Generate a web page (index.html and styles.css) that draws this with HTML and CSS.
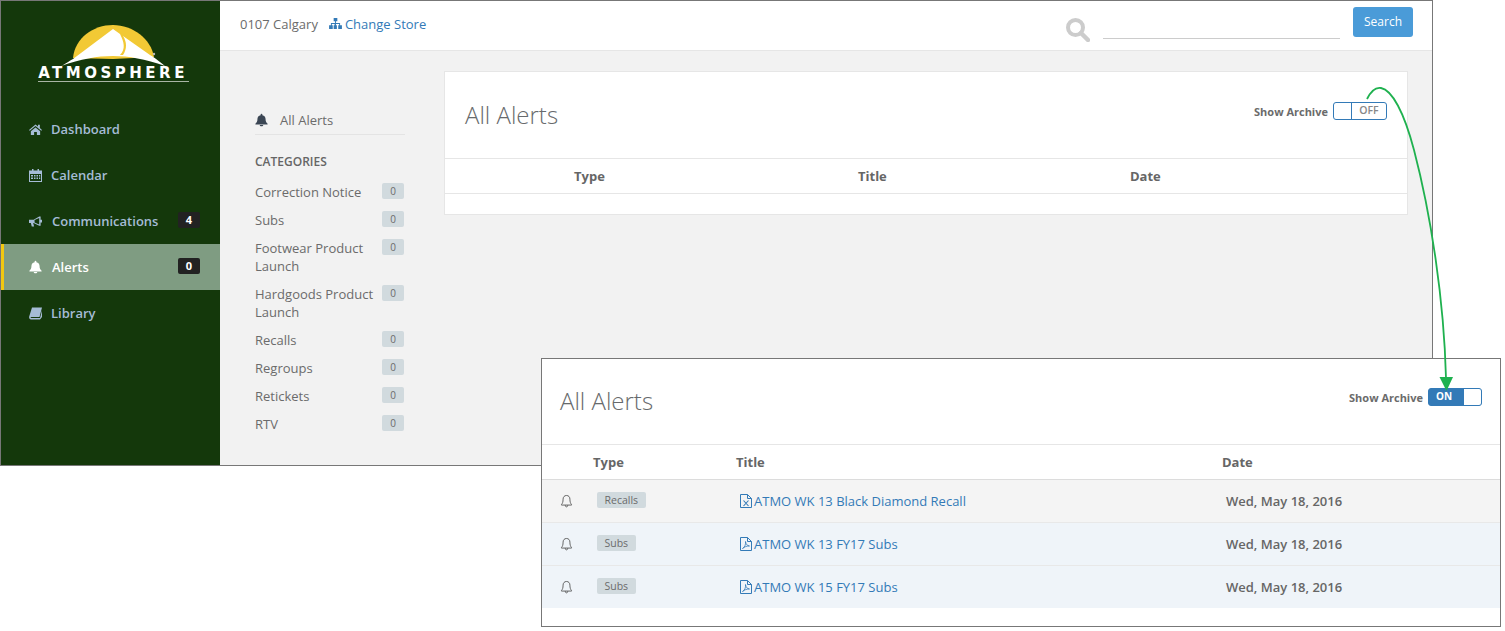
FILE: index.html
```html
<!DOCTYPE html>
<html>
  <head>
    <title>Atmosphere Alerts</title>
    <link rel="stylesheet" href="styles.css">
  </head>
  <body>
    <svg class="sprite" width="0" height="0">
      <symbol id="bell" viewBox="0 0 16 16">
        <path d="M8 0.3c.7 0 1.100.4 1.100 1.100v.7c2.500.5 3.900 2.300 3.900 4.700 0 3 .8 4.300 2.500 5.800v.9H.5v-.9C2.200 11.100 3 9.800 3 6.800 3 4.400 4.400 2.600 6.900 2.100v-.7C6.900.700 7.300.300 8 .300zM5.800 14.300h4.400c0 1-.9 1.500-2.200 1.500s-2.200-.5-2.200-1.500z"/>
      </symbol>
      <symbol id="bell-line" viewBox="0 0 16 16">
        <path d="M8 1.200c2.700 0 4.200 2 4.200 4.500 0 3.600.8 5.300 2 6.700v.6H1.800v-.6c1.200-1.400 2-3.100 2-6.700 0-2.500 1.500-4.500 4.200-4.500zM6.500 13.200c0 1.500.7 2 1.500 2s1.500-.5 1.500-2" fill="none" stroke="currentColor" stroke-width="1.100"/>
      </symbol>
      <symbol id="pdf" viewBox="0 0 12 14">
        <path d="M.5.500h7l4 4v9H.5zM7.500.500v4h4" fill="none" stroke="currentColor"/>
        <path d="M2.500 11.500c2-1 3.500-4 3-7 .5 3 1.500 4 4 4.500-3-.2-5 1-7 2.500z" fill="none" stroke="currentColor" stroke-width=".8"/>
      </symbol>
      <symbol id="xls" viewBox="0 0 12 14">
        <path d="M.5.500h7l4 4v9H.5zM7.500.500v4h4" fill="none" stroke="currentColor"/>
        <path d="M3.500 6.500l5 5.500M8.500 6.500l-5 5.500" fill="none" stroke="currentColor" stroke-width="1.100"/>
      </symbol>
    </svg>

    <div class="window">
      <aside class="sidebar">
        <div class="logo">
          <svg class="logo-mark" width="112" height="44" viewBox="0 0 112 44">
            <path d="M16 34C18 14 36 1 56 1s38 14 41 32L56 35z" fill="#f2c935"/>
            <path d="M4 42C10 39 14 36 16 35L56 5L63 10C67 18 69 25 63 31L66 31C70 25 70 18 66 12L93 31C100 35 104 39 108 42C88 35 72 32 56 32S24 35 4 42z" fill="#fff"/>
            <circle cx="97" cy="30" r="1.200" fill="#bbb"/>
          </svg>
          <div class="logo-name">ATMOSPHERE</div>
        </div>
        <nav class="nav">
          <a class="nav-item">
            <svg class="nav-icon" viewBox="0 0 14 12"><path d="M7 .5L0 6.500l.8.900L7 2.200l6.200 5.200.8-.9-2.300-2V1h-2v1.800zM2 8l5-4.200L12 8v4H8.500V8.800h-3V12H2z"/></svg>
            <span class="nav-label">Dashboard</span>
          </a>
          <a class="nav-item">
            <svg class="nav-icon" viewBox="0 0 13 13"><path d="M3 0h1.500v1.500h4V0H10v1.500h3V13H0V1.500h3zM1 5v7h11V5zM2 6h2v1.500H2zM5 6h1.500v1.500H5zM7.500 6H9v1.500H7.500zM10 6h1.200v1.500H10zM2 8.500h2V10H2zM5 8.500h1.500V10H5zM7.500 8.500H9V10H7.500zM10 8.500h1.200V10H10z" fill-rule="evenodd"/></svg>
            <span class="nav-label">Calendar</span>
          </a>
          <a class="nav-item nav-item-wide">
            <svg class="nav-icon" viewBox="0 0 14 12"><path d="M0 4h5l6-3.500h1.500V4H14v3h-1.500v3.500H11L5 7.500H4.500l1 4H3L2 7.500H0zM6 4.500v2.500l5 2.300V2.200z" fill-rule="evenodd"/></svg>
            <span class="nav-label">Communications</span>
            <span class="nav-badge">4</span>
          </a>
          <a class="nav-item nav-item-wide active">
            <svg class="nav-icon nav-bell"><use href="#bell"/></svg>
            <span class="nav-label">Alerts</span>
            <span class="nav-badge">0</span>
          </a>
          <a class="nav-item">
            <svg class="nav-icon" viewBox="0 0 13 12"><path d="M3 0h10l-2.500 9.500H2.500c-.8 0-1 .5-.8 1h9.300L13 3v6.500L11 12H2C.5 12-.2 10.500.2 9z"/></svg>
            <span class="nav-label">Library</span>
          </a>
        </nav>
      </aside>

      <div class="content">
        <header class="topbar">
          <span class="store">0107 Calgary</span>
          <a class="change-store">
            <svg class="sitemap" viewBox="0 0 14 12"><path d="M5 0h4v3.500H7.500v2h4.500v2.500h2V12h-4V8h1V6.500h-3.500V8h1v4H5V8h1V6.500H3V8h1v4H0V8h2V5.500h4.500v-2H5z"/></svg>
            Change Store
          </a>
          <svg class="search-icon" viewBox="0 0 24 24"><circle cx="9.500" cy="9.500" r="7.500" fill="none" stroke="currentColor" stroke-width="4"/><path d="M15 15l7 7" stroke="currentColor" stroke-width="4.500" stroke-linecap="round"/></svg>
          <div class="search-input"></div>
          <button class="search-btn">Search</button>
        </header>

        <div class="main">
          <div class="filters">
            <div class="all-alerts">
              <svg class="all-icon"><use href="#bell"/></svg>
              All Alerts
            </div>
            <div class="cat-title">CATEGORIES</div>
            <div class="cat"><span>Correction Notice</span><span class="count">0</span></div>
            <div class="cat"><span>Subs</span><span class="count">0</span></div>
            <div class="cat"><span>Footwear Product Launch</span><span class="count">0</span></div>
            <div class="cat"><span>Hardgoods Product Launch</span><span class="count">0</span></div>
            <div class="cat"><span>Recalls</span><span class="count">0</span></div>
            <div class="cat"><span>Regroups</span><span class="count">0</span></div>
            <div class="cat"><span>Retickets</span><span class="count">0</span></div>
            <div class="cat"><span>RTV</span><span class="count">0</span></div>
          </div>

          <section class="panel">
            <div class="panel-head">
              <h1>All Alerts</h1>
              <span class="archive-label">Show Archive</span>
              <div class="switch">
                <span class="knob"></span>
                <span class="switch-off">OFF</span>
              </div>
            </div>
            <div class="cols">
              <span class="col-type">Type</span>
              <span class="col-title">Title</span>
              <span>Date</span>
            </div>
          </section>
        </div>
      </div>
    </div>

    <section class="popout">
      <div class="pop-head">
        <h1>All Alerts</h1>
        <span class="archive-label">Show Archive</span>
        <div class="switch switch-on">
          <span class="switch-text">ON</span>
          <span class="knob"></span>
        </div>
      </div>
      <div class="pop-cols">
        <span class="pc-type">Type</span>
        <span class="pc-title">Title</span>
        <span>Date</span>
      </div>
      <div class="pop-row grey">
        <svg class="row-bell"><use href="#bell-line"/></svg>
        <span class="pc-label"><span class="tag">Recalls</span></span>
        <a class="doc"><svg class="doc-icon"><use href="#xls"/></svg>ATMO WK 13 Black Diamond Recall</a>
        <span class="row-date">Wed, May 18, 2016</span>
      </div>
      <div class="pop-row">
        <svg class="row-bell"><use href="#bell-line"/></svg>
        <span class="pc-label"><span class="tag">Subs</span></span>
        <a class="doc"><svg class="doc-icon"><use href="#pdf"/></svg>ATMO WK 13 FY17 Subs</a>
        <span class="row-date">Wed, May 18, 2016</span>
      </div>
      <div class="pop-row">
        <svg class="row-bell"><use href="#bell-line"/></svg>
        <span class="pc-label"><span class="tag">Subs</span></span>
        <a class="doc"><svg class="doc-icon"><use href="#pdf"/></svg>ATMO WK 15 FY17 Subs</a>
        <span class="row-date">Wed, May 18, 2016</span>
      </div>
    </section>

    <svg class="arrow" width="1505" height="631" viewBox="0 0 1505 631">
      <path d="M1367 99C1371 91 1376 87 1381 88C1392 90 1404 112 1414 150C1431 215 1444 300 1446 378" fill="none" stroke="#1fb14f" stroke-width="1.800"/>
      <path d="M1439.500 377L1453 377L1446.500 391z" fill="#1fb14f"/>
    </svg>
  </body>
</html>
```

FILE: styles.css
```css
body {
  margin: 0;
  background: #fff;
  font-family: "Open Sans", sans-serif;
  font-size: 13px;
  color: #6b6b6b;
}

.sprite { position: absolute; }

.window {
  display: flex;
  width: 1431px;
  height: 464px;
  border: 1px solid #777;
}

/* sidebar */
.sidebar {
  width: 219px;
  flex-shrink: 0;
  background: #14380b;
}

.logo {
  height: 105px;
  box-sizing: border-box;
  padding: 23px 0 0 5px;
  display: flex;
  flex-direction: column;
  align-items: center;
}

.logo-mark { display: block; }

.logo-name {
  width: 151px;
  margin-top: -1px;
  padding-bottom: 1px;
  border-bottom: 1px solid #a9b5a5;
  font-family: "DejaVu Sans", sans-serif;
  font-weight: bold;
  font-size: 15px;
  line-height: 13px;
  letter-spacing: 3.500px;
  text-align: center;
  white-space: nowrap;
  color: #fff;
}

.nav-item {
  display: flex;
  align-items: center;
  height: 46px;
  padding: 0 20px 0 28px;
  font-weight: 600;
  color: #a5bcd6;
}

.nav-icon {
  width: 13px;
  height: 13px;
  margin-right: 9px;
  fill: currentColor;
  flex-shrink: 0;
}

.nav-bell { height: 14px; }

.nav-item-wide .nav-icon { margin-right: 10px; }

.nav-label { flex: 1; }

.nav-badge {
  width: 22px;
  height: 16px;
  margin-top: -2px;
  border-radius: 2px;
  background: #222;
  color: #fff;
  font-size: 11px;
  font-weight: 700;
  line-height: 16px;
  text-align: center;
}

.nav-item.active {
  padding-left: 25px;
  border-left: 3px solid #f2c811;
  background: #7f9c82;
  color: #fff;
}

/* top bar */
.content {
  flex: 1;
  display: flex;
  flex-direction: column;
  background: #f2f2f2;
}

.topbar {
  display: flex;
  align-items: center;
  height: 49px;
  flex-shrink: 0;
  padding: 0 19px 0 20px;
  background: #fff;
  border-bottom: 1px solid #e6e6e6;
}

.store { margin-right: 11px; margin-top: -4px; }

.change-store {
  display: flex;
  align-items: center;
  margin-top: -4px;
  color: #337ab7;
}

.sitemap {
  width: 13px;
  height: 11px;
  margin-right: 3px;
  fill: currentColor;
}

.search-icon {
  width: 24px;
  height: 24px;
  margin-left: auto;
  margin-top: 9px;
  color: #ccc;
}

.search-input {
  width: 237px;
  height: 38px;
  margin: 0 13px;
  box-sizing: border-box;
  border-bottom: 1px solid #ccc;
  align-self: flex-start;
}

.search-btn {
  width: 60px;
  height: 30px;
  margin-top: -8px;
  padding: 0;
  border: none;
  border-radius: 3px;
  background: #4a9bd8;
  color: #fff;
  font-family: "Open Sans", sans-serif;
  font-size: 12px;
}

/* left filter list */
.main {
  flex: 1;
  display: flex;
  align-items: flex-start;
  padding: 20px 24px 0 35px;
}

.filters {
  width: 150px;
  margin-right: 39px;
  padding-top: 39px;
}

.all-alerts {
  display: flex;
  align-items: center;
  height: 20px;
  padding-bottom: 4px;
  border-bottom: 1px solid #e4e4e4;
}

.all-icon {
  width: 13px;
  height: 14px;
  margin-right: 12px;
  fill: #3b4654;
}

.cat-title {
  margin: 18px 0 12px;
  font-size: 12px;
  font-weight: 600;
  line-height: 18px;
  color: #666;
}

.cat {
  display: flex;
  justify-content: space-between;
  align-items: flex-start;
  margin-bottom: 10px;
  padding-right: 1px;
  line-height: 18px;
}

.cat > span:first-child { max-width: 125px; }

.count {
  width: 22px;
  height: 16px;
  flex-shrink: 0;
  border-radius: 2px;
  background: #d1dade;
  font-size: 10px;
  line-height: 16px;
  text-align: center;
}

/* panel */
.panel {
  flex: 1;
  background: #fff;
  border: 1px solid #e6e6e6;
  height: 142px;
}

.panel-head {
  display: flex;
  align-items: center;
  height: 86px;
  padding: 0 20px;
  border-bottom: 1px solid #e6e6e6;
}

h1 {
  flex: 1;
  margin: -2px 0 0;
  font-size: 24px;
  font-weight: 300;
  color: #676a6c;
}

.archive-label {
  margin: -8px 5px 0 0;
  font-size: 11px;
  font-weight: 700;
  color: #6b6b6b;
}

.switch {
  display: flex;
  width: 54px;
  height: 18px;
  margin-top: -9px;
  box-sizing: border-box;
  border: 1px solid #337ab7;
  border-radius: 3px;
  background: #fff;
  overflow: hidden;
}

.knob {
  width: 17px;
  border-right: 1px solid #337ab7;
  flex-shrink: 0;
}

.switch-off {
  flex: 1;
  font-size: 10.500px;
  font-weight: 600;
  line-height: 15px;
  text-align: center;
  color: #888;
}

.cols {
  display: flex;
  align-items: center;
  height: 34px;
  border-bottom: 1px solid #e6e6e6;
  font-weight: 700;
  color: #666;
}

.col-type { margin-left: 129px; width: 284px; }
.col-title { width: 272px; }

/* popout over the window */
.popout {
  position: absolute;
  left: 541px;
  top: 358px;
  width: 958px;
  height: 267px;
  border: 1px solid #777;
  background: #fff;
}

.pop-head {
  display: flex;
  align-items: center;
  height: 85px;
  padding: 0 18px;
  border-bottom: 1px solid #e6e6e6;
}

.pop-head .switch { margin-top: -10px; }

.pop-head .archive-label { margin-top: -9px; }

.switch-on { background: #337ab7; }

.switch-on .knob {
  width: 17px;
  border-right: none;
  background: #fff;
}

.switch-text {
  flex: 1;
  color: #fff;
  font-size: 10px;
  font-weight: 700;
  line-height: 15px;
  text-align: center;
  padding-right: 5px;
}

.pop-cols {
  display: flex;
  align-items: center;
  height: 34px;
  padding-left: 51px;
  border-bottom: 1px solid #dcdcdc;
  font-weight: 700;
  color: #666;
}

.pc-type { width: 143px; }
.pc-title { width: 486px; }

.pop-row {
  display: flex;
  align-items: center;
  height: 42px;
  border-bottom: 1px solid #e8e8e8;
  background: #eff4f9;
}

.pop-row:last-child { border-bottom: none; }

.pop-row.grey { background: #f4f4f4; }

.row-bell {
  width: 13px;
  height: 14px;
  margin-left: 18px;
  flex-shrink: 0;
  color: #555;
}

.pc-label { width: 143px; margin-left: 24px; }

.tag {
  display: inline-block;
  padding: 0 7.500px;
  border-radius: 2px;
  background: #d1dade;
  font-size: 10.500px;
  line-height: 16px;
  vertical-align: top;
}

.doc {
  display: flex;
  align-items: center;
  width: 486px;
  color: #337ab7;
}

.doc-icon {
  width: 12px;
  height: 14px;
  margin-right: 2px;
}

.row-date { font-weight: 600; color: #666; }

.arrow {
  position: absolute;
  left: 0;
  top: 0;
  pointer-events: none;
}
```
